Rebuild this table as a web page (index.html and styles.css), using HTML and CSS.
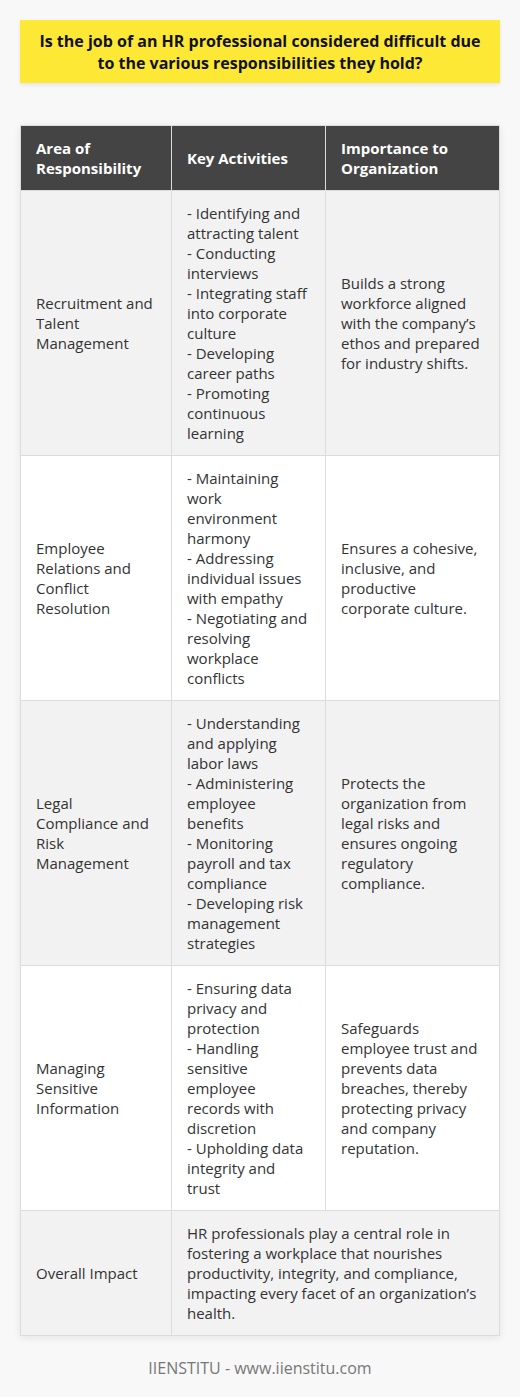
FILE: index.html
```html
<!DOCTYPE html>
<html lang="en">
<head>
<meta charset="utf-8">
<link rel="stylesheet" href="styles.css">
</head>
<body>
<div class="page">
  <h1 class="title">Is the job of an HR professional considered difficult due to the various responsibilities they hold?</h1>
  <table class="grid">
    <colgroup><col class="c1"><col class="c2"><col class="c3"></colgroup>
    <thead>
      <tr><th>Area of Responsibility</th><th>Key Activities</th><th>Importance to Organization</th></tr>
    </thead>
    <tbody>
      <tr>
        <td>Recruitment and Talent Management</td>
        <td>- Identifying and attracting talent<br>- Conducting interviews<br>- Integrating staff into corporate culture<br>- Developing career paths<br>- Promoting continuous learning</td>
        <td>Builds a strong workforce aligned with the company’s ethos and prepared for industry shifts.</td>
      </tr>
      <tr>
        <td>Employee Relations and Conflict Resolution</td>
        <td>- Maintaining work environment harmony<br>- Addressing individual issues with empathy<br>- Negotiating and resolving workplace conflicts</td>
        <td>Ensures a cohesive, inclusive, and productive corporate culture.</td>
      </tr>
      <tr>
        <td>Legal Compliance and Risk Management</td>
        <td>- Understanding and applying labor laws<br>- Administering employee benefits<br>- Monitoring payroll and tax compliance<br>- Developing risk management strategies</td>
        <td>Protects the organization from legal risks and ensures ongoing regulatory compliance.</td>
      </tr>
      <tr>
        <td>Managing Sensitive Information</td>
        <td>- Ensuring data privacy and protection<br>- Handling sensitive employee records with discretion<br>- Upholding data integrity and trust</td>
        <td>Safeguards employee trust and prevents data breaches, thereby protecting privacy and company reputation.</td>
      </tr>
      <tr>
        <td>Overall Impact</td>
        <td colspan="2">HR professionals play a central role in fostering a workplace that nourishes productivity, integrity, and compliance, impacting every facet of an organization’s health.</td>
      </tr>
    </tbody>
  </table>
  <p class="footer">IIENSTITU - www.iienstitu.com</p>
</div>
</body>
</html>
```
FILE: styles.css
```css
html, body {
  margin: 0;
  padding: 0;
  background: #f8f8f8;
}
body {
  font-family: "Open Sans", "Liberation Sans", sans-serif;
  color: #333;
}
.page {
  padding: 20px;
}
.title {
  margin: 0 0 42px 0;
  background: #fde935;
  color: #111;
  font-size: 16px;
  line-height: 22px;
  font-weight: 700;
  text-align: center;
  padding: 10px 12px 9px;
  box-shadow: 0 2px 4px rgba(0,0,0,0.08);
}
.grid {
  width: 480px;
  border-collapse: collapse;
  table-layout: fixed;
  box-shadow: 0 2px 8px rgba(0,0,0,0.08);
}
.c1 { width: 151px; }
.c2 { width: 154px; }
.grid th, .grid td {
  border: 1px solid #dcdcdc;
  padding: 12px 15px;
  font-size: 15px;
  line-height: 20px;
  text-align: left;
  vertical-align: middle;
}
.grid th {
  background: #444;
  color: #fff;
  font-weight: 700;
}
.grid tbody tr:nth-child(odd) td {
  background: #f2f2f2;
}
.grid tbody tr:nth-child(even) td {
  background: #fff;
}
.footer {
  margin: 21px 0 0 0;
  text-align: center;
  font-size: 16px;
  line-height: 22px;
  color: #777;
}
```
